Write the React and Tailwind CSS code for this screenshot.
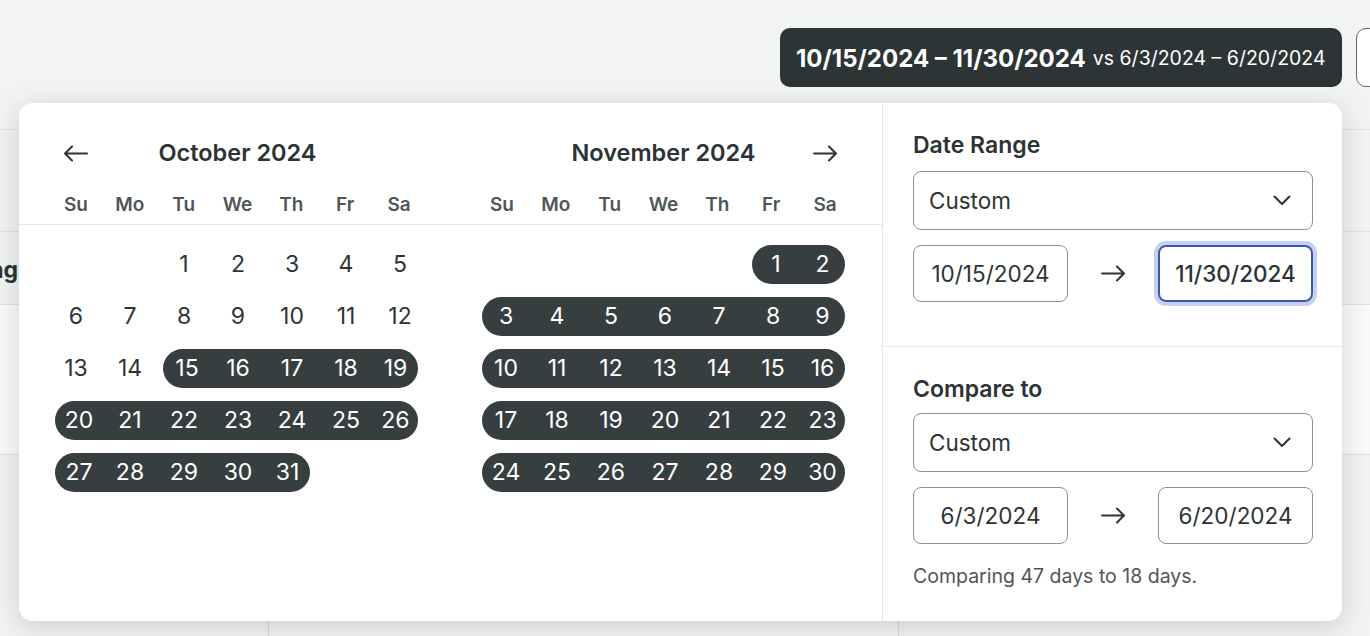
import React from 'react';

const FONT = { fontFamily: 'Inter, "Noto Sans", sans-serif' };
const WEEKDAYS = ['Su', 'Mo', 'Tu', 'We', 'Th', 'Fr', 'Sa'];

const months = [
  { title: 'October 2024', start: 2, count: 31, selFrom: 15, selTo: 31, nav: 'left' },
  { title: 'November 2024', start: 5, count: 30, selFrom: 1, selTo: 30, nav: 'right' },
];

const Arrow = ({ flip }) => (
  <svg width="24" height="17" viewBox="0 0 24 17" fill="none" className={flip ? 'rotate-180' : ''}>
    <path d="M1 8.5H23M16 1.5L23 8.5L16 15.5" stroke="#2d3435" strokeWidth="2" strokeLinecap="round" strokeLinejoin="round" />
  </svg>
);

const Chevron = () => (
  <svg width="18" height="11" viewBox="0 0 18 11" fill="none">
    <path d="M1.5 1.5L9 9L16.5 1.5" stroke="#2d3435" strokeWidth="2" strokeLinecap="round" strokeLinejoin="round" />
  </svg>
);

const buildWeeks = (start, count) => {
  const cells = [];
  for (let i = 0; i < start; i++) cells.push(null);
  for (let d = 1; d <= count; d++) cells.push(d);
  while (cells.length % 7 !== 0) cells.push(null);
  const weeks = [];
  for (let i = 0; i < cells.length; i += 7) weeks.push(cells.slice(i, i + 7));
  return weeks;
};

const MonthHeader = ({ month }) => (
  <div className="w-[378px]">
    <div className="flex h-10 items-center justify-between">
      <div className="flex w-[54px] justify-center">{month.nav === 'left' && <Arrow flip />}</div>
      <div className="text-[23.5px] font-semibold text-[#2b3335]">{month.title}</div>
      <div className="flex w-[54px] justify-center">{month.nav === 'right' && <Arrow />}</div>
    </div>
    <div className="mt-[18px] grid h-6 grid-cols-7 items-center text-center text-[19px] font-semibold text-[#4e5758]">
      {WEEKDAYS.map((w) => (
        <div key={w}>{w}</div>
      ))}
    </div>
  </div>
);

const MonthDays = ({ month }) => {
  const weeks = buildWeeks(month.start, month.count);
  const isSel = (d) => d !== null && d >= month.selFrom && d <= month.selTo;
  return (
    <div className="flex w-[378px] flex-col gap-[13px]">
      {weeks.map((week, wi) => (
        <div key={wi} className="flex h-[39px]">
          {week.map((d, i) => {
            if (d === null) return <div key={i} className="w-[54px]" />;
            if (!isSel(d)) {
              return (
                <div key={i} className="flex w-[54px] items-center justify-center text-[23px] text-[#2d3435]">
                  {d}
                </div>
              );
            }
            const first = i === 0 || !isSel(week[i - 1]);
            const last = i === 6 || !isSel(week[i + 1]);
            let shape = '';
            if (first) shape += ' ml-[6px] rounded-l-full';
            if (last) shape += ' mr-[9px] rounded-r-full';
            return (
              <div key={i} className="flex w-[54px]">
                <div className={'flex flex-1 items-center justify-center bg-[#363e3f] text-[23px] text-white' + shape}>
                  {d}
                </div>
              </div>
            );
          })}
        </div>
      ))}
    </div>
  );
};

const Select = () => (
  <div className="flex h-[59px] items-center justify-between rounded-[8px] border border-[#8a9292] pl-[15px] pr-[21px] text-[22.5px] text-[#2d3435]">
    <span>Custom</span>
    <Chevron />
  </div>
);

const DateInput = ({ value, focused }) => (
  <div
    className={
      'flex h-[57px] w-[155px] items-center justify-center rounded-[8px] text-[22.5px] text-[#2d3435] ' +
      (focused ? 'border-2 border-[#3a58ad] font-medium ring-4 ring-[#c6d1f0]' : 'border border-[#8a9292]')
    }
  >
    {value}
  </div>
);

const RangeRow = ({ from, to, focusTo }) => (
  <div className="flex items-center justify-between">
    <DateInput value={from} />
    <Arrow />
    <DateInput value={to} focused={focusTo} />
  </div>
);

export default function App() {
  return (
    <div className="relative h-[636px] w-full overflow-hidden bg-[#f2f3f3]" style={FONT}>
      {/* page behind the popover */}
      <div className="h-[130px] border-b border-[#dfe2e2]">
        <div className="flex gap-[14px] pl-[780px] pt-[28px]">
          <div className="flex h-[59px] w-[562px] shrink-0 items-center rounded-[10px] bg-[#2c3435] pl-[16px] pt-[3px] text-white">
            <span className="text-[24px] font-bold">10/15/2024 – 11/30/2024</span>
            <span className="ml-[7px] text-[19.5px]">vs 6/3/2024 – 6/20/2024</span>
          </div>
          <div className="h-[59px] w-[120px] shrink-0 rounded-[10px] border border-[#5f6767] bg-white" />
        </div>
      </div>
      <div className="h-[102px] border-b border-[#dfe2e2]" />
      <div className="flex h-[73px] items-center border-b border-[#dfe2e2] pt-[5px]">
        <div className="flex w-[18px] justify-end whitespace-nowrap text-[23px] font-bold text-[#2b3335]">Pricing</div>
      </div>
      <div className="h-[150px] border-b border-[#dfe2e2] bg-[#f9fafa]" />
      <div className="flex h-[200px]">
        <div className="w-[268px]" />
        <div className="w-[630px] border-l border-[#d8dbdb]" />
        <div className="flex-1 border-l border-[#d8dbdb]" />
      </div>

      {/* popover */}
      <div className="absolute left-[19px] top-[103px] flex h-[518px] w-[1323px] rounded-[14px] bg-white shadow-[0_6px_30px_rgba(0,0,0,0.16)]">
        <div className="w-[863px]">
          <div className="flex gap-[49px] border-b border-[#e8eaea] px-[30px] pb-[9px] pt-[30px]">
            {months.map((m) => (
              <MonthHeader key={m.title} month={m} />
            ))}
          </div>
          <div className="flex gap-[49px] px-[30px] pt-[20px]">
            {months.map((m) => (
              <MonthDays key={m.title} month={m} />
            ))}
          </div>
        </div>
        <div className="w-[460px] border-l border-[#e6e8e8]">
          <div className="border-b border-[#e8eaea] pb-[44px] pl-[30px] pr-[29px] pt-[28px]">
            <div className="text-[23px] font-semibold leading-[28px] text-[#2b3335]">Date Range</div>
            <div className="mt-[12px]">
              <Select />
            </div>
            <div className="mt-[15px]">
              <RangeRow from="10/15/2024" to="11/30/2024" focusTo />
            </div>
          </div>
          <div className="pl-[30px] pr-[29px] pt-[28px]">
            <div className="text-[23px] font-semibold leading-[28px] text-[#2b3335]">Compare to</div>
            <div className="mt-[10px]">
              <Select />
            </div>
            <div className="mt-[15px]">
              <RangeRow from="6/3/2024" to="6/20/2024" />
            </div>
            <div className="mt-[20px] text-[19.5px] leading-[24px] text-[#4e5758]">Comparing 47 days to 18 days.</div>
          </div>
        </div>
      </div>
    </div>
  );
}
